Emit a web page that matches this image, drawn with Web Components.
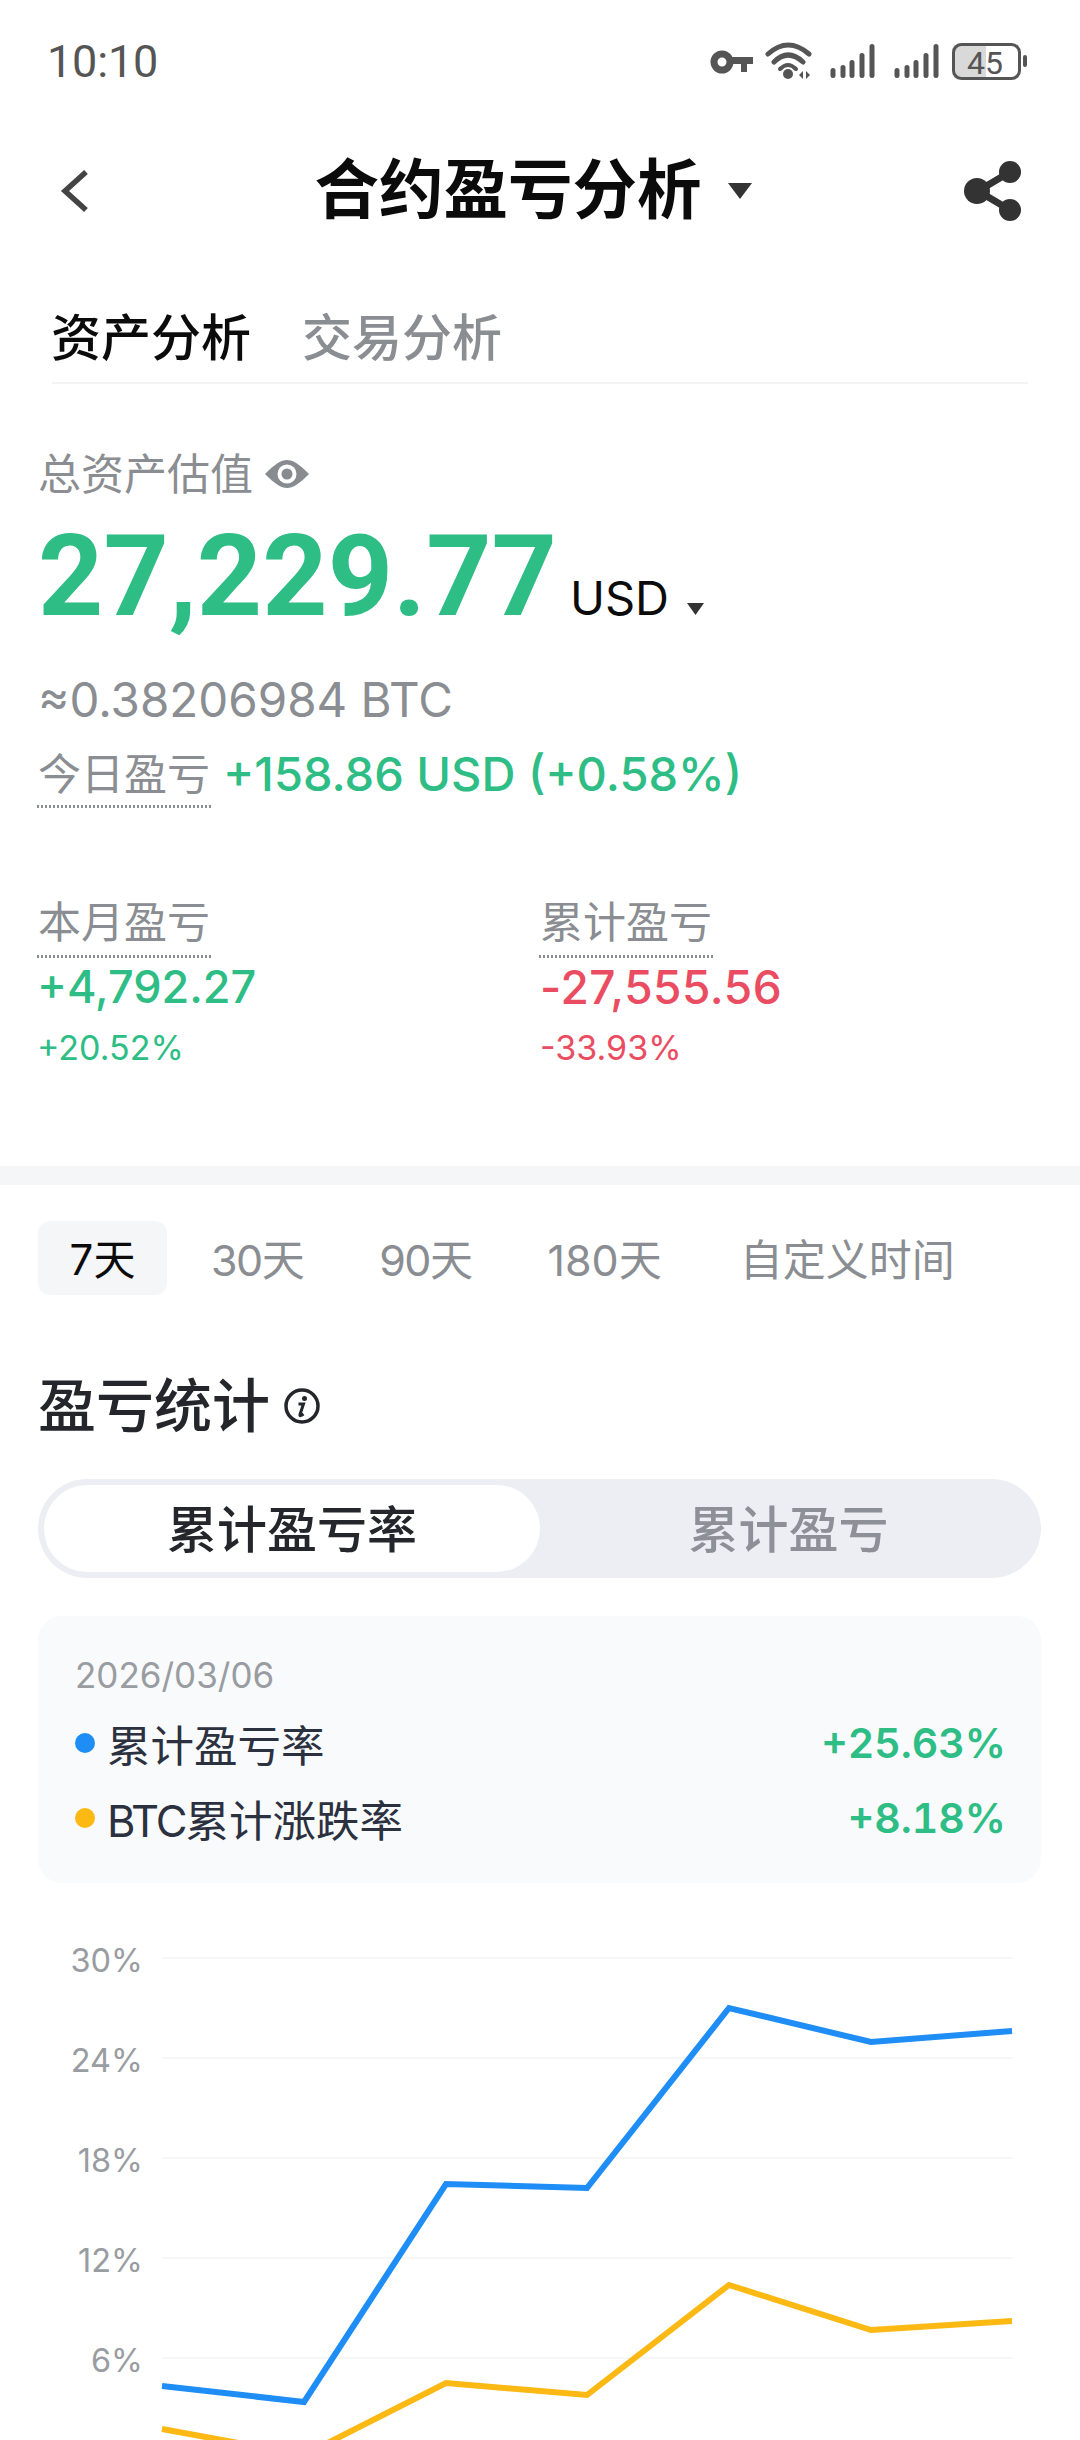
<!DOCTYPE html>
<html lang="zh">
<head>
<meta charset="utf-8">
<title>合约盈亏分析</title>
<style>
html, body { margin: 0; height: 2440px; overflow: hidden; background: #fff; }
body { font-family: Inter, "Noto Sans CJK SC", sans-serif; }
.band { display: block; height: 19px; background: #f5f6f7; }
</style>
</head>
<body>
<status-bar></status-bar>
<nav-bar>合约盈亏分析</nav-bar>
<top-tabs></top-tabs>
<asset-summary></asset-summary>
<div class="band"></div>
<period-tabs></period-tabs>
<section-head>盈亏统计</section-head>
<seg-toggle></seg-toggle>
<legend-card></legend-card>
<line-chart></line-chart>

<script>
const FONT = 'Inter, "Noto Sans CJK SC", sans-serif';
const GREEN = '#2dbd85';
const RED = '#ea4c62';
const GREY = '#8a8d91';

class StatusBar extends HTMLElement {
    constructor() {
        super();
        this.attachShadow({mode: 'open'});
        this.shadowRoot.innerHTML = `
<style>
:host { display: flex; align-items: center; justify-content: space-between; height: 122px; padding: 0 50px 0 47px; box-sizing: border-box; color: #555; font-family: Roboto, sans-serif; }
.time { font-size: 45px; letter-spacing: -0.2px; }
svg { display: block; }
.num { font: 400 32px Roboto, sans-serif; fill: #555; }
</style>
<span class="time">10:10</span>
<svg width="330" height="40" viewBox="0 0 330 40">
  <circle cx="22" cy="21" r="8" fill="none" stroke="#555" stroke-width="7"/>
  <path d="M30 16h23v7H47v8h-6v-8H30z" fill="#555"/>
  <path d="M68 13Q88 -5 109 13M74 21Q88 7 103 21" fill="none" stroke="#555" stroke-width="5" stroke-linecap="round"/>
  <circle cx="88" cy="33" r="5" fill="#555"/>
  <path d="M80 28Q88 20 96 28" fill="none" stroke="#555" stroke-width="4" stroke-linecap="round"/>
  <path d="M103 30l-4 4 4 4zM106 30l4 4-4 4z" fill="#555"/>
  <g stroke="#555" stroke-width="5" stroke-linecap="round">
    <path d="M133 29.500v5M143 26.500v8M152 21.500v13M162 14.500v20M172 5.500v29"/>
    <path d="M197 29.500v5M207 26.500v8M216 21.500v13M226 14.500v20M236 5.500v29"/>
  </g>
  <path d="M260 2h26v37h-26a8 8 0 0 1-8-8V10a8 8 0 0 1 8-8z" fill="#d9d9d9"/>
  <rect x="253.500" y="3.500" width="66" height="34" rx="8" fill="none" stroke="#555" stroke-width="3"/>
  <text class="num" x="285" y="33" text-anchor="middle">45</text>
  <rect x="323" y="14" width="4" height="12" rx="2" fill="#555"/>
</svg>`;
    }
}

class NavBar extends HTMLElement {
    constructor() {
        super();
        this.attachShadow({mode: 'open'});
        this.shadowRoot.innerHTML = `
<style>
:host { display: flex; align-items: center; height: 138px; padding: 0 58px 0 60px; box-sizing: border-box; font-family: ${FONT}; }
.title { flex: 1; display: flex; align-items: center; justify-content: center; gap: 26px; font-size: 64.500px; font-weight: 700; color: #0b0b0b; padding-left: 12px; }
.title span { margin-bottom: 12px; }
svg { display: block; }
</style>
<svg width="30" height="44" viewBox="0 0 30 44"><path d="M26 3L5 22l21 19" fill="none" stroke="#444" stroke-width="5.500"/></svg>
<div class="title"><span><slot></slot></span><svg width="24" height="16" viewBox="0 0 24 16"><path d="M0 0h24L12 16z" fill="#333"/></svg></div>
<svg width="58" height="60" viewBox="0 0 58 60">
  <path d="M46 11L14 30l32 19" fill="none" stroke="#333" stroke-width="7"/>
  <circle cx="46" cy="11" r="11" fill="#333"/><circle cx="13" cy="30" r="13" fill="#333"/><circle cx="46" cy="49" r="11" fill="#333"/>
</svg>`;
    }
}

class TopTabs extends HTMLElement {
    constructor() {
        super();
        this.attachShadow({mode: 'open'});
        this.shadowRoot.innerHTML = `
<style>
:host { display: flex; gap: 51px; margin: 0 52px; height: 124px; padding-top: 42px; box-sizing: border-box; border-bottom: 2px solid #f2f3f4; font-family: ${FONT}; font-size: 50px; font-weight: 500; line-height: 72px; }
.on { color: #0b0b0b; margin-left: -1px; }
.off { color: ${GREY}; }
</style>
<span class="on">资产分析</span><span class="off">交易分析</span>`;
    }
}

class DottedLabel extends HTMLElement {
    constructor() {
        super();
        this.attachShadow({mode: 'open'});
        this.shadowRoot.innerHTML = `
<style>
:host { display: inline-block; font-size: 43px; line-height: 56px; color: ${GREY}; padding: 0 1px var(--dot-gap, 6px); margin-left: -1px; background: repeating-linear-gradient(90deg, ${GREY} 0 2px, transparent 2px 4px) left bottom / 100% 3px no-repeat; }
</style>
<slot></slot>`;
    }
}

class PnlStat extends HTMLElement {
    constructor() {
        super();
        this.attachShadow({mode: 'open'});
        this.shadowRoot.innerHTML = `
<style>
:host { display: block; color: ${GREEN}; --dot-gap: 8px; }
:host([tone="down"]) { color: ${RED}; }
.val { font-size: 45px; font-weight: 500; line-height: 62px; margin: -2px 0 0 -1px; }
:host([tone="down"]) .val { font-size: 46px; letter-spacing: .5px; margin-left: 0; }
.pct { font-size: 34px; line-height: 48px; margin: 6px 0 0 -1px; }
:host([tone="down"]) .pct { margin-left: 0; }
</style>
<dotted-label><slot name="label"></slot></dotted-label>
<div class="val"><slot name="value"></slot></div>
<div class="pct"><slot name="pct"></slot></div>`;
    }
}

class AssetSummary extends HTMLElement {
    constructor() {
        super();
        this.attachShadow({mode: 'open'});
        this.shadowRoot.innerHTML = `
<style>
:host { display: block; height: 782px; box-sizing: border-box; padding: 62px 38px 0; font-family: ${FONT}; }
.head { display: flex; align-items: center; gap: 12px; font-size: 43px; line-height: 56px; color: ${GREY}; }
.amount { display: flex; align-items: baseline; margin-top: 8px; height: 132px; }
.big { font-family: Roboto, sans-serif; font-size: 114px; font-weight: 700; color: ${GREEN}; line-height: 132px; }
.cur { font-size: 47px; color: #0b0b0b; margin-left: 13px; display: flex; align-items: baseline; gap: 18px; }
.cur svg { margin-bottom: 7px; }
.btc { font-size: 47.500px; line-height: 60px; color: ${GREY}; margin-top: 28px; }
.today { display: flex; align-items: flex-start; gap: 12px; margin-top: 16px; }
.today span { font-size: 47px; font-weight: 500; line-height: 56px; color: ${GREEN}; }
.stats { display: grid; grid-template-columns: 502px 1fr; margin-top: 86px; }
</style>
<div class="head">总资产估值<svg width="44" height="28" viewBox="0 0 44 28"><path d="M0 14C10 4 16 0 22 0S34 4 44 14C34 24 28 28 22 28S10 24 0 14z" fill="#888b90"/><circle cx="22" cy="14" r="9.500" fill="#fff"/><circle cx="22" cy="14" r="5.500" fill="#888b90"/></svg></div>
<div class="amount"><span class="big">27,229.77</span><span class="cur">USD<svg width="17" height="12" viewBox="0 0 17 12"><path d="M0 0h17L8.500 12z" fill="#333"/></svg></span></div>
<div class="btc">≈0.38206984 BTC</div>
<div class="today"><dotted-label>今日盈亏</dotted-label><span>+158.86 USD (+0.58%)</span></div>
<div class="stats">
  <pnl-stat><span slot="label">本月盈亏</span><span slot="value">+4,792.27</span><span slot="pct">+20.52%</span></pnl-stat>
  <pnl-stat tone="down"><span slot="label">累计盈亏</span><span slot="value">-27,555.56</span><span slot="pct">-33.93%</span></pnl-stat>
</div>`;
    }
}

class PeriodTabs extends HTMLElement {
    constructor() {
        super();
        this.attachShadow({mode: 'open'});
        this.shadowRoot.innerHTML = `
<style>
:host { display: flex; align-items: flex-start; padding: 36px 0 0 38px; font-family: ${FONT}; font-size: 43px; color: ${GREY}; }
span { height: 74px; line-height: 78px; white-space: nowrap; }
.on { width: 129px; font-size: 42px; text-align: center; background: #f5f6f7; border-radius: 12px; color: #0b0b0b; margin-right: 44px; }
.g { margin-right: 76px; letter-spacing: -1.500px; }
.w { margin-right: 78px; }
</style>
<span class="on">7天</span><span class="g">30天</span><span class="g">90天</span><span class="w">180天</span><span>自定义时间</span>`;
    }
}

class SectionHead extends HTMLElement {
    constructor() {
        super();
        this.attachShadow({mode: 'open'});
        this.shadowRoot.innerHTML = `
<style>
:host { display: flex; align-items: center; gap: 14px; padding: 71px 38px 0; font-family: ${FONT}; font-size: 58px; font-weight: 500; color: #24262b; line-height: 80px; }
svg { display: block; }
</style>
<slot></slot>
<svg width="36" height="36" viewBox="0 0 36 36"><circle cx="18" cy="18" r="16" fill="none" stroke="#24262b" stroke-width="3.500"/><circle cx="20.500" cy="10.500" r="2.500" fill="#24262b"/><path d="M14.500 16h5l-3.500 10.500q-.5 2.500 3.500 -.5" fill="none" stroke="#24262b" stroke-width="3"/></svg>`;
    }
}

class SegToggle extends HTMLElement {
    constructor() {
        super();
        this.attachShadow({mode: 'open'});
        this.shadowRoot.innerHTML = `
<style>
:host { display: grid; grid-template-columns: 496px 1fr; height: 99px; margin: 33px 39px 0 38px; padding: 6px 0 6px 6px; box-sizing: border-box; background: #eceef4; border-radius: 50px; font-family: ${FONT}; font-size: 50px; font-weight: 500; }
span { display: flex; align-items: center; justify-content: center; border-radius: 44px; padding-bottom: 5px; box-sizing: border-box; }
.on { background: #fff; color: #24262b; }
.off { color: #8d9097; padding-right: 4px; }
</style>
<span class="on">累计盈亏率</span><span class="off">累计盈亏</span>`;
    }
}

class LegendRow extends HTMLElement {
    constructor() {
        super();
        this.attachShadow({mode: 'open'});
        this.shadowRoot.innerHTML = `
<style>
:host { display: flex; align-items: center; height: 74px; }
i { width: 20px; height: 20px; border-radius: 50%; background: var(--dot); margin-right: 12px; }
.name { flex: 1; font-size: 43.500px; color: #2c3140; }
.val { font-size: 41px; font-weight: 600; color: ${GREEN}; font-variant-numeric: tabular-nums; }
</style>
<i></i><span class="name"><slot name="name"></slot></span><span class="val"><slot name="value"></slot></span>`;
    }
}

class LegendCard extends HTMLElement {
    constructor() {
        super();
        this.attachShadow({mode: 'open'});
        this.shadowRoot.innerHTML = `
<style>
:host { display: block; height: 267px; margin: 38px 39px 0 38px; padding: 34px 35px 0 37px; box-sizing: border-box; background: #f8fafc; border-radius: 24px; font-family: ${FONT}; }
.date { font-size: 35px; line-height: 50px; color: #999ca1; margin-bottom: 6px; }
legend-row:last-child { margin-top: 1px; }
.btc { letter-spacing: -2px; }
</style>
<div class="date">2026/03/06</div>
<legend-row style="--dot:#1e8df5"><span slot="name">累计盈亏率</span><span slot="value">+25.63%</span></legend-row>
<legend-row style="--dot:#fcb813"><span slot="name"><span class="btc">BTC</span>累计涨跌率</span><span slot="value">+8.18%</span></legend-row>`;
    }
}

class LineChart extends HTMLElement {
    constructor() {
        super();
        this.attachShadow({mode: 'open'});
        const gridY = [1958, 2058, 2158, 2258, 2358];
        const labels = ['30%', '24%', '18%', '12%', '6%'];
        const xs = [162, 304, 446, 587, 729, 871, 1012];
        const blue = [2386, 2402, 2184, 2188, 2008, 2042, 2031];
        const gold = [2429, 2455, 2383, 2395, 2285, 2330, 2321];
        const top = 1883;
        const pts = ys => ys.map((y, i) => xs[i] + ',' + (y - top)).join(' ');
        const grid = gridY.map((y, i) =>
            `<line x1="162" x2="1012" y1="${y - top}" y2="${y - top}"/>` +
            `<text x="143" y="${y - top + 14}">${labels[i]}</text>`).join('');
        this.shadowRoot.innerHTML = `
<style>
:host { display: block; height: 557px; }
svg { display: block; }
line { stroke: #f5f6f7; stroke-width: 2; }
text { font: 32.500px Inter, sans-serif; fill: #999ca1; text-anchor: end; }
polyline { fill: none; stroke-width: 6; stroke-linejoin: miter; }
</style>
<svg width="1080" height="557" viewBox="0 0 1080 557">
${grid}
<polyline stroke="#1e8df5" points="${pts(blue)}"/>
<polyline stroke="#fcb813" points="${pts(gold)}"/>
</svg>`;
    }
}

customElements.define('status-bar', StatusBar);
customElements.define('nav-bar', NavBar);
customElements.define('top-tabs', TopTabs);
customElements.define('dotted-label', DottedLabel);
customElements.define('pnl-stat', PnlStat);
customElements.define('asset-summary', AssetSummary);
customElements.define('period-tabs', PeriodTabs);
customElements.define('section-head', SectionHead);
customElements.define('seg-toggle', SegToggle);
customElements.define('legend-row', LegendRow);
customElements.define('legend-card', LegendCard);
customElements.define('line-chart', LineChart);
</script>
</body>
</html>
